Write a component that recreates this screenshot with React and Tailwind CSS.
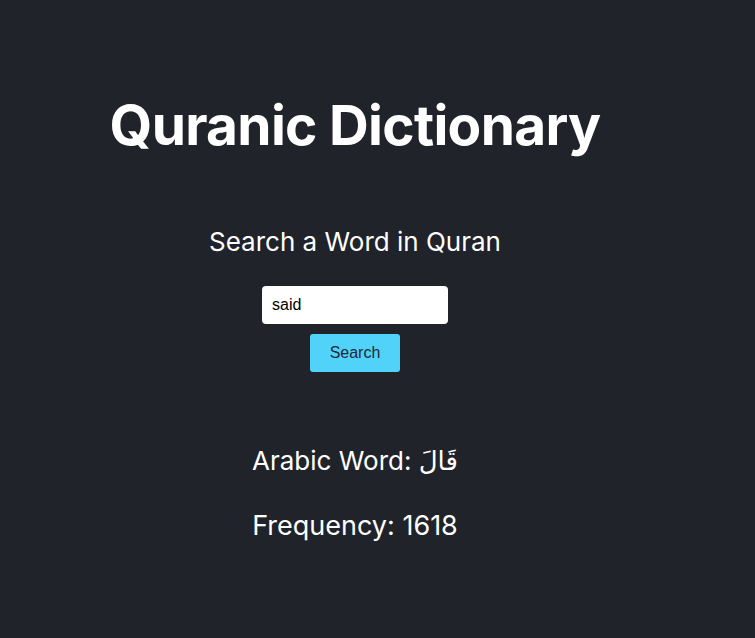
import { useState } from "react";

export default function App() {
  const [word, setWord] = useState("said");

  return (
    <div className="min-h-[638px] w-full bg-[#20232a] text-white font-['Inter','Noto_Sans','DejaVu_Sans',sans-serif]">
      <div className="w-[710px] flex flex-col items-center">
        {/* Header */}
        <h1 className="mt-[89px] text-[55px] leading-[72px] font-bold tracking-[-0.7px]">
          Quranic Dictionary
        </h1>

        {/* Search */}
        <h2 className="mt-[64px] text-[26px] leading-[34px]">Search a Word in Quran</h2>
        <input
          type="text"
          value={word}
          onChange={(e) => setWord(e.target.value)}
          className="mt-[27px] w-[186px] h-[38px] rounded-[4px] bg-white px-[10px] text-[16px] text-black outline-none font-['Liberation_Sans',sans-serif]"
        />
        <button className="mt-[10px] w-[90px] h-[38px] rounded-[3px] bg-[#51d2f9] text-[16px] text-[#1f2937] font-['Liberation_Sans',sans-serif]">
          Search
        </button>

        {/* Result */}
        <p className="mt-[71px] text-[26px] leading-[36px]">
          Arabic Word: <span className="font-['DejaVu_Sans',sans-serif]">قَالَ</span>
        </p>
        <p className="mt-[29px] text-[27px] leading-[36px]">Frequency: 1618</p>
      </div>
    </div>
  );
}
